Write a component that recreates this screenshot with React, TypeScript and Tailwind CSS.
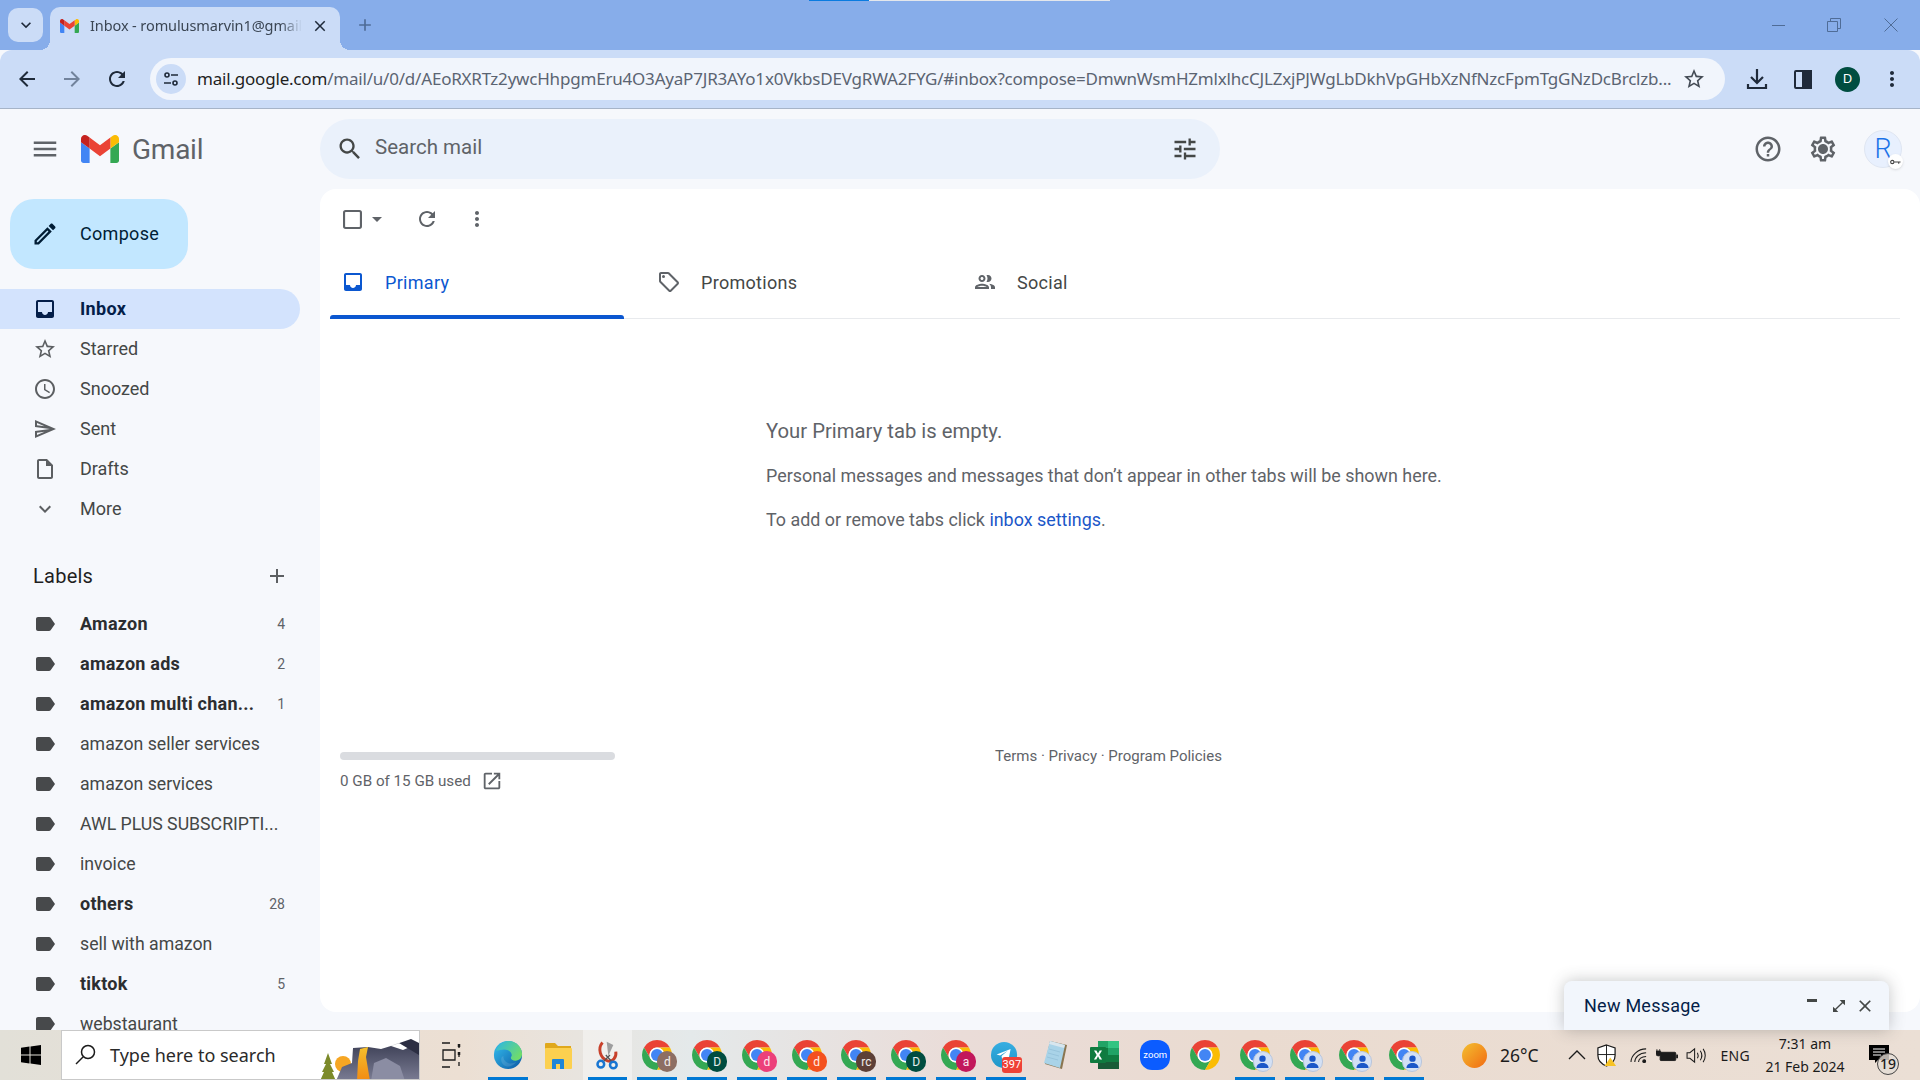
import { ReactNode } from 'react';

const URL_PATH = '/mail/u/0/d/AEoRXRTz2ywcHhpgmEru4O3AyaP7JR3AYo1x0VkbsDEVgRWA2FYG/#inbox?compose=DmwnWsmHZmlxlhcCJLZxjPJWgLbDkhVpGHbXzNfNzcFpmTgGNzDcBrclzb...';

const P = {
  inbox: 'M19 3H4.99c-1.11 0-1.98.89-1.98 2L3 19c0 1.1.88 2 1.99 2H19c1.1 0 2-.9 2-2V5c0-1.11-.9-2-2-2zm0 12h-4c0 1.66-1.35 3-3 3s-3-1.34-3-3H4.99V5H19v10z',
  star: 'M22 9.24l-7.19-.62L12 2 9.19 8.63 2 9.24l5.46 4.73L5.82 21 12 17.27 18.18 21l-1.63-7.03L22 9.24zM12 15.4l-3.76 2.27 1-4.28-3.32-2.88 4.38-.38L12 6.1l1.71 4.04 4.38.38-3.32 2.88 1 4.28L12 15.4z',
  clock: 'M11.99 2C6.47 2 2 6.48 2 12s4.47 10 9.99 10C17.52 22 22 17.52 22 12S17.52 2 11.99 2zM12 20c-4.42 0-8-3.58-8-8s3.58-8 8-8 8 3.58 8 8-3.58 8-8 8zm.5-13H11v6l5.25 3.15.75-1.23-4.5-2.67z',
  sent: 'M4.01 6.03l7.51 3.22-7.52-1 .01-2.22m7.5 8.72L4 17.97v-2.22l7.51-1M2.01 3L2 10l15 2-15 2 .01 7L23 12 2.01 3z',
  draft: 'M14 2H6c-1.1 0-2 .9-2 2v16c0 1.1.9 2 2 2h12c1.1 0 2-.9 2-2V8l-6-6zm4 18H6V4h7v5h5v11z',
  chevron: 'M16.59 8.59L12 13.17 7.41 8.59 6 10l6 6 6-6z',
  label: 'M17.63 5.84C17.27 5.33 16.67 5 16 5L5 5.01C3.9 5.01 3 5.9 3 7v10c0 1.1.9 1.99 2 1.99L16 19c.67 0 1.27-.33 1.63-.84L22 12l-4.37-6.16z',
  refresh: 'M17.65 6.35C16.2 4.9 14.21 4 12 4c-4.42 0-7.99 3.58-7.99 8s3.57 8 7.99 8c3.73 0 6.84-2.55 7.73-6h-2.08c-.82 2.33-3.04 4-5.65 4-3.31 0-6-2.69-6-6s2.69-6 6-6c1.66 0 3.14.69 4.22 1.78L13 11h7V4l-2.35 2.35z',
  dots: 'M12 8c1.1 0 2-.9 2-2s-.9-2-2-2-2 .9-2 2 .9 2 2 2zm0 2c-1.1 0-2 .9-2 2s.9 2 2 2 2-.9 2-2-.9-2-2-2zm0 6c-1.1 0-2 .9-2 2s.9 2 2 2 2-.9 2-2-.9-2-2-2z',
  tune: 'M3 17v2h6v-2H3zM3 5v2h10V5H3zm10 16v-2h8v-2h-8v-2h-2v6h2zM7 9v2H3v2h4v2h2V9H7zm14 4v-2H11v2h10zm-6-4h2V7h4V5h-4V3h-2v6z',
  search: 'M15.5 14h-.79l-.28-.27C15.41 12.59 16 11.11 16 9.5 16 5.91 13.09 3 9.5 3S3 5.91 3 9.5 5.91 16 9.5 16c1.61 0 3.09-.59 4.23-1.57l.27.28v.79l5 4.99L20.49 19l-4.99-5zm-6 0C7.01 14 5 11.99 5 9.5S7.01 5 9.5 5 14 7.01 14 9.5 11.99 14 9.5 14z',
  help: 'M11 18h2v-2h-2v2zm1-16C6.48 2 2 6.48 2 12s4.48 10 10 10 10-4.48 10-10S17.52 2 12 2zm0 18c-4.41 0-8-3.59-8-8s3.59-8 8-8 8 3.59 8 8-3.59 8-8 8zm0-14c-2.21 0-4 1.79-4 4h2c0-1.1.9-2 2-2s2 .9 2 2c0 2-3 1.75-3 5h2c0-2.25 3-2.5 3-5 0-2.21-1.79-4-4-4z',
  gear: 'M19.43 12.98c.04-.32.07-.64.07-.98 0-.34-.03-.66-.07-.98l2.11-1.65c.19-.15.24-.42.12-.64l-2-3.46c-.09-.16-.26-.25-.44-.25-.06 0-.12.01-.17.03l-2.49 1c-.52-.4-1.08-.73-1.69-.98l-.38-2.65C14.46 2.18 14.25 2 14 2h-4c-.25 0-.46.18-.49.42l-.38 2.65c-.61.25-1.17.59-1.69.98l-2.49-1c-.06-.02-.12-.03-.18-.03-.17 0-.34.09-.43.25l-2 3.46c-.13.22-.07.49.12.64l2.11 1.65c-.04.32-.07.65-.07.98 0 .33.03.66.07.98l-2.11 1.65c-.19.15-.24.42-.12.64l2 3.46c.09.16.26.25.44.25.06 0 .12-.01.17-.03l2.49-1c.52.4 1.08.73 1.69.98l.38 2.65c.03.24.24.42.49.42h4c.25 0 .46-.18.49-.42l.38-2.65c.61-.25 1.17-.59 1.69-.98l2.49 1c.06.02.12.03.18.03.17 0 .34-.09.43-.25l2-3.46c.12-.22.07-.49-.12-.64l-2.11-1.65zm-1.98-1.71c.04.31.05.52.05.73 0 .21-.02.43-.05.73l-.14 1.13.89.7 1.08.84-.7 1.21-1.27-.51-1.04-.42-.9.68c-.43.32-.84.56-1.25.73l-1.06.43-.16 1.13-.2 1.35h-1.4l-.19-1.35-.16-1.13-1.06-.43c-.43-.18-.83-.41-1.23-.71l-.91-.7-1.06.43-1.27.51-.7-1.21 1.08-.84.89-.7-.14-1.13c-.03-.31-.05-.54-.05-.74s.02-.43.05-.73l.14-1.13-.89-.7-1.08-.84.7-1.21 1.27.51 1.04.42.9-.68c.43-.32.84-.56 1.25-.73l1.06-.43.16-1.13.2-1.35h1.39l.19 1.35.16 1.13 1.06.43c.43.18.83.41 1.23.71l.91.7 1.06-.43 1.27-.51.7 1.21-1.07.85-.89.7.14 1.13zM12 8c-2.21 0-4 1.79-4 4s1.79 4 4 4 4-1.79 4-4-1.79-4-4-4z',
  offer: 'M21.41 11.58l-9-9C12.05 2.22 11.55 2 11 2H4c-1.1 0-2 .9-2 2v7c0 .55.22 1.05.59 1.42l9 9c.36.36.86.58 1.41.58s1.05-.22 1.41-.59l7-7c.37-.36.59-.86.59-1.41s-.23-1.06-.59-1.42zM13 20.01L4 11V4h7v-.01l9 9-7 7.02zM6.5 5A1.5 1.5 0 1 0 6.5 8 1.5 1.5 0 1 0 6.5 5z',
  people: 'M9 13.75c-2.34 0-7 1.17-7 3.5V19h14v-1.75c0-2.33-4.66-3.5-7-3.5zM4.34 17c.84-.58 2.87-1.25 4.66-1.25s3.82.67 4.66 1.25H4.34zM9 12c1.93 0 3.5-1.57 3.5-3.5S10.93 5 9 5 5.5 6.57 5.5 8.5 7.07 12 9 12zm0-5c.83 0 1.5.67 1.5 1.5S9.83 10 9 10s-1.5-.67-1.5-1.5S8.17 7 9 7zm7.04 6.81c1.16.84 1.96 1.96 1.96 3.44V19h4v-1.75c0-2.02-3.5-3.17-5.96-3.44zM15 12c1.93 0 3.5-1.57 3.5-3.5S16.93 5 15 5c-.54 0-1.04.13-1.5.35.63.89 1 1.98 1 3.15s-.37 2.26-1 3.15c.46.22.96.35 1.5.35z',
  open: 'M19 19H5V5h7V3H5c-1.11 0-2 .9-2 2v14c0 1.1.89 2 2 2h14c1.1 0 2-.9 2-2v-7h-2v7zM14 3v2h3.59l-9.83 9.83 1.41 1.41L19 6.41V10h2V3h-7z',
  back: 'M20 11H7.83l5.59-5.59L12 4l-8 8 8 8 1.41-1.41L7.83 13H20v-2z',
  forward: 'M4 11h12.17l-5.59-5.59L12 4l8 8-8 8-1.41-1.41L16.17 13H4v-2z',
  plus: 'M19 13h-6v6h-2v-6H5v-2h6V5h2v6h6v2z',
  close: 'M19 6.41L17.59 5 12 10.59 6.41 5 5 6.41 10.59 12 5 17.59 6.41 19 12 13.41 17.59 19 19 17.59 13.41 12z',
  menu: 'M3 18h18v-2H3v2zm0-5h18v-2H3v2zm0-7v2h18V6H3z',
  pen: 'M14.06 9.02l.92.92L5.92 19H5v-.92l9.06-9.06M17.66 3c-.25 0-.51.1-.7.29l-1.83 1.83 3.75 3.75 1.83-1.83c.39-.39.39-1.02 0-1.41l-2.34-2.34c-.2-.2-.45-.29-.71-.29zm-3.6 3.19L3 17.25V21h3.75L17.81 9.94l-3.75-3.75z',
  expand: 'M21 11V3h-8l3.29 3.29-10 10L3 13v8h8l-3.29-3.29 10-10z',
};

const Icon = ({ d, size = 24, className = '' }: { d: string; size?: number; className?: string }) => (
  <svg viewBox="0 0 24 24" width={size} height={size} className={`shrink-0 fill-current ${className}`}>
    <path d={d} />
  </svg>
);

const GmailLogo = ({ w, h }: { w: number; h: number }) => (
  <svg viewBox="52 42 88 66" width={w} height={h} className="shrink-0" preserveAspectRatio="none">
    <path fill="#4285f4" d="M58 108h14V74L52 59v43c0 3.32 2.69 6 6 6" />
    <path fill="#34a853" d="M120 108h14c3.32 0 6-2.69 6-6V59l-20 15" />
    <path fill="#fbbc04" d="M120 48v26l20-15v-8c0-7.42-8.47-11.65-14.4-7.2" />
    <path fill="#ea4335" d="M72 74V48l24 18 24-18v26L96 92" />
    <path fill="#c5221f" d="M52 51v8l20 15V48l-5.6-4.2c-5.94-4.45-14.4-.22-14.4 7.2" />
  </svg>
);

const ChromeIcon = () => (
  <svg viewBox="4 4 40 40" width={30} height={30} className="shrink-0">
    <path fill="#ea4335" d="M24 4A20 20 0 0 1 41.32 14H24A10 10 0 0 0 15.34 29L6.68 14A20 20 0 0 1 24 4z" />
    <path fill="#34a853" d="M6.68 14A20 20 0 0 0 24 44L32.66 29A10 10 0 0 1 15.34 29z" />
    <path fill="#fbbc04" d="M41.32 14H24A10 10 0 0 1 32.66 29L24 44A20 20 0 0 0 41.32 14z" />
    <circle cx="24" cy="24" r="10" fill="#fff" />
    <circle cx="24" cy="24" r="8" fill="#4285f4" />
  </svg>
);

const ProfileChrome = ({ letter, bg }: { letter?: string; bg?: string }) => (
  <div className="relative w-[30px] h-[30px]">
    <ChromeIcon />
    {letter ? (
      <div className={`absolute left-[15px] top-[11px] w-[20px] h-[21px] rounded-full flex items-center justify-center text-[12px] text-white/90 font-[family-name:Roboto,sans-serif] ${bg}`}>
        {letter}
      </div>
    ) : (
      <div className="absolute left-[13px] top-[11px] w-[20px] h-[21px] rounded-full bg-[#d3e0f5] border border-[#b9c6dc] flex items-center justify-center">
        <svg viewBox="0 0 24 24" width={17} height={17} className="fill-[#1a56c8]">
          <circle cx="12" cy="8" r="4.5" />
          <path d="M3.5 21c0-4.5 4-7 8.5-7s8.5 2.5 8.5 7z" />
        </svg>
      </div>
    )}
  </div>
);

const EdgeIcon = () => (
  <svg viewBox="0 0 32 32" width={30} height={32}>
    <defs>
      <linearGradient id="edgeA" x1="0" y1="0" x2="1" y2="1">
        <stop offset="0" stopColor="#35c1f1" />
        <stop offset="1" stopColor="#0c59a4" />
      </linearGradient>
      <linearGradient id="edgeB" x1="0" y1="0" x2="1" y2="0.6">
        <stop offset="0" stopColor="#2bb6e6" />
        <stop offset="1" stopColor="#6fdc6c" />
      </linearGradient>
    </defs>
    <circle cx="16" cy="16" r="15" fill="url(#edgeA)" />
    <path d="M3 11C6 3 13 1 17 1c7 0 14 6 14 14 0 4-3 7-7 7-3 0-5-1-5-3 0-1 1-1.5 1-3 0-3-3.5-6-8-6-4 0-7.5 2-9 1z" fill="url(#edgeB)" />
    <path d="M11 17c0 5 4 8 8 8 2 0 4-.5 6-2-3 5-8 6-11 5-4-1-6-5-5-9 .5-1.5 2-2 2-2z" fill="#fff" fillOpacity=".12" />
  </svg>
);

const FolderIcon = () => (
  <svg viewBox="0 0 28 30" width={28} height={30}>
    <path d="M1 4a1 1 0 0 1 1-1h9l3 3h13v4H1z" fill="#e0a81c" />
    <rect x="1" y="8" width="27" height="21" rx="1" fill="#fcd04f" />
    <path d="M8 29v-9a1 1 0 0 1 1-1h10a1 1 0 0 1 1 1v9h-4v-5h-4v5z" fill="#1f86d6" />
  </svg>
);

const SnipIcon = () => (
  <svg viewBox="0 0 30 36" width={25} height={32} fill="none">
    <path d="M9 3C3 10 6 22 15 25c6 2 11-4 10-11" stroke="#c8412b" strokeWidth="3.5" />
    <path d="M14 2l2 17 6-13z" fill="#9e9e9e" />
    <path d="M18 18L9 27M13 18l8 9" stroke="#555" strokeWidth="1.5" />
    <circle cx="7" cy="29" r="4" stroke="#1976d2" strokeWidth="3" />
    <circle cx="22" cy="30" r="4" stroke="#1976d2" strokeWidth="3" />
  </svg>
);

const TelegramIcon = () => (
  <div className="relative w-[30px] h-[30px]">
    <svg viewBox="0 0 30 30" width={28} height={30}>
      <defs>
        <linearGradient id="tg" x1="0.5" y1="0" x2="0.5" y2="1">
          <stop offset="0" stopColor="#37aee2" />
          <stop offset="1" stopColor="#1e96c8" />
        </linearGradient>
      </defs>
      <circle cx="14" cy="15" r="14" fill="url(#tg)" />
      <path d="M6 14.5l15-6-2.5 13-4.5-3.5-2 2.2-.7-4.2 6.5-5.5-8 5z" fill="#fff" />
    </svg>
    <div className="absolute left-[11px] top-[17px] w-[20px] h-[16px] rounded-[3px] bg-[#ef4136] text-white text-[11px] leading-[16px] text-center font-[family-name:Roboto,sans-serif]">397</div>
  </div>
);

const NotepadIcon = () => (
  <svg viewBox="0 0 30 30" width={30} height={30}>
    <path d="M9 1l17 4-5 24-17-5z" fill="#8a7550" />
    <path d="M9 1l15 4-5 23L3 23z" fill="#a9d3e8" />
    <path d="M9 1l15 4-1 3L8 4z" fill="#d8e6ee" />
    <path d="M8 9l11 3M7 13l11 3M6 17l11 3" stroke="#8fbdd6" strokeWidth=".7" />
  </svg>
);

const ExcelIcon = () => (
  <svg viewBox="0 0 30 30" width={30} height={30}>
    <rect x="8" y="1" width="21" height="28" fill="#107c41" />
    <rect x="18" y="1" width="11" height="7" fill="#33c481" />
    <rect x="8" y="1" width="10" height="7" fill="#21a366" />
    <rect x="18" y="8" width="11" height="7" fill="#21a366" />
    <rect x="18" y="22" width="11" height="7" fill="#185c37" />
    <rect x="8" y="22" width="10" height="7" fill="#185c37" />
    <rect x="0" y="7" width="16" height="16" rx="1" fill="#0f7b3f" />
    <path d="M4 10.5h2.4L8 13.6l1.7-3.1H12L9.3 15l2.8 4.5H9.700L8 16.300 6.300 19.500H3.900L6.700 15z" fill="#fff" />
  </svg>
);

const ZoomIcon = () => (
  <div className="w-[30px] h-[30px] rounded-[12px] bg-[#0b5cff] text-white text-[9.5px] leading-[30px] text-center font-[family-name:Roboto,sans-serif]">zoom</div>
);

// what sits in each taskbar slot, left to right
const taskbarItems: { icon: ReactNode; active?: boolean; highlight?: boolean }[] = [
  { icon: <EdgeIcon />, active: true },
  { icon: <FolderIcon /> },
  { icon: <SnipIcon />, active: true, highlight: true },
  { icon: <ProfileChrome letter="d" bg="bg-[#8d6e63]" />, active: true },
  { icon: <ProfileChrome letter="D" bg="bg-[#004d40]" />, active: true },
  { icon: <ProfileChrome letter="d" bg="bg-[#ec407a]" />, active: true },
  { icon: <ProfileChrome letter="d" bg="bg-[#f4511e]" />, active: true },
  { icon: <ProfileChrome letter="rc" bg="bg-[#5d4037]" />, active: true },
  { icon: <ProfileChrome letter="D" bg="bg-[#004d40]" />, active: true },
  { icon: <ProfileChrome letter="a" bg="bg-[#c2185b]" />, active: true },
  { icon: <TelegramIcon />, active: true },
  { icon: <NotepadIcon /> },
  { icon: <ExcelIcon /> },
  { icon: <ZoomIcon /> },
  { icon: <ChromeIcon /> },
  { icon: <ProfileChrome />, active: true },
  { icon: <ProfileChrome />, active: true },
  { icon: <ProfileChrome />, active: true },
  { icon: <ProfileChrome />, active: true },
];

const navItems = [
  { name: 'Starred', d: P.star },
  { name: 'Snoozed', d: P.clock },
  { name: 'Sent', d: P.sent },
  { name: 'Drafts', d: P.draft },
  { name: 'More', d: P.chevron },
];

const labels = [
  { name: 'Amazon', count: 4 },
  { name: 'amazon ads', count: 2 },
  { name: 'amazon multi chan...', count: 1 },
  { name: 'amazon seller services' },
  { name: 'amazon services' },
  { name: 'AWL PLUS SUBSCRIPTI...' },
  { name: 'invoice' },
  { name: 'others', count: 28 },
  { name: 'sell with amazon' },
  { name: 'tiktok', count: 5 },
  { name: 'webstaurant' },
];

function TabStrip() {
  return (
    <div className="relative h-[50px] shrink-0 flex items-end bg-[#87ADEA] font-[family-name:'Noto_Sans',sans-serif]">
      <div className="absolute left-[809px] top-0 h-px w-[60px] bg-[#0a7be0]" />
      <div className="absolute left-[869px] top-0 h-px w-[241px] bg-[#e4e7ec]" />
      <div className="self-start mt-[8px] ml-[8px] w-[35px] h-[34px] rounded-[10px] bg-[#CBDCF7] flex items-center justify-center text-[#1f2a3a]">
        <Icon d={P.chevron} size={20} />
      </div>
      <div className="relative ml-[7px] w-[290px] h-[43px] rounded-t-[10px] bg-[#CBDCF7] flex items-center pl-[10px] pb-[6px]">
        <div className="absolute -left-[10px] bottom-0 w-[10px] h-[10px] bg-[radial-gradient(circle_at_0_0,transparent_10px,#CBDCF7_10px)]" />
        <div className="absolute -right-[10px] bottom-0 w-[10px] h-[10px] bg-[radial-gradient(circle_at_100%_0,transparent_10px,#CBDCF7_10px)]" />
        <GmailLogo w={19} h={14} />
        <span className="ml-[11px] w-[212px] whitespace-nowrap text-[14.5px] text-[#3b4654] tracking-[-0.1px] [mask-image:linear-gradient(90deg,#000_90%,transparent_100%)]">Inbox - romulusmarvin1@gmail</span>
        <Icon d={P.close} size={18} className="ml-[9px] text-[#1f2a3a]" />
      </div>
      <div className="self-center ml-[15px] text-[#4f6c97]">
        <Icon d={P.plus} size={20} />
      </div>
      <div className="ml-auto self-center flex items-center text-[#4f6c97]">
        <div className="w-[56px] flex justify-center"><div className="w-[13px] h-px bg-[#4f6c97]" /></div>
        <div className="w-[56px] flex justify-center">
          <svg viewBox="0 0 14 14" width={14} height={14} fill="none" stroke="currentColor"><path d="M.5 3.500h10v10H.5zM3.500 3.500v-3h10v10h-3" /></svg>
        </div>
        <div className="w-[58px] flex justify-center">
          <svg viewBox="0 0 14 14" width={14} height={14} fill="none" stroke="currentColor"><path d="M.5.500l13 13M13.500.500l-13 13" /></svg>
        </div>
      </div>
    </div>
  );
}

function AddressBar() {
  return (
    <div className="h-[59px] shrink-0 flex items-center rounded-t-[12px] bg-[#CBDCF7] border-b border-[#a6b4c8] font-[family-name:'Noto_Sans',sans-serif]">
      <div className="w-[54px] pl-[15px] text-[#1f2a3a]"><Icon d={P.back} /></div>
      <div className="w-[45px] pl-[6px] text-[#72839c]"><Icon d={P.forward} /></div>
      <div className="w-[51px] pl-[6px] text-[#1f2a3a]"><Icon d={P.refresh} /></div>
      <div className="w-[1575px] h-[42px] rounded-full bg-[#F1F5FC] flex items-center pl-[6px]">
        <div className="w-[30px] h-[30px] rounded-full bg-[#CBDCF7] flex items-center justify-center">
          <svg viewBox="0 0 16 16" width={16} height={16} fill="none" stroke="#1f2a3a" strokeWidth="1.6">
            <circle cx="4" cy="4" r="2" />
            <path d="M8 4h7M1 12h7" />
            <circle cx="12" cy="12" r="2" />
          </svg>
        </div>
        <span className="ml-[11px] w-[1475px] whitespace-nowrap text-[17px] tracking-[-0.2px] text-[#5b6472]">
          <span className="text-[#1f1f1f]">mail.google.com</span>{URL_PATH}
        </span>
        <Icon d={P.star} size={24} className="ml-[10px] text-[#444b55]" />
      </div>
      <div className="ml-[20px] w-[24px] text-[#1f2a3a]">
        <svg viewBox="0 0 24 24" width={24} height={24} fill="none" stroke="currentColor" strokeWidth="2.200">
          <path d="M12 2v13M6 10l6 6 6-6M3 17v4h18v-4" />
        </svg>
      </div>
      <div className="ml-[22px] w-[24px] text-[#1f2a3a]">
        <svg viewBox="0 0 24 24" width={24} height={24} fill="none" stroke="currentColor" strokeWidth="2">
          <rect x="4" y="4" width="16" height="17" rx="1" />
          <rect x="12" y="4" width="8" height="17" fill="currentColor" />
        </svg>
      </div>
      <div className="ml-[20px] w-[25px] h-[25px] rounded-full bg-[#004d40] text-white text-[13px] flex items-center justify-center">D</div>
      <div className="ml-[20px] text-[#1f2a3a]"><Icon d={P.dots} size={24} /></div>
    </div>
  );
}

function Sidebar() {
  return (
    <div className="w-[320px] shrink-0 flex flex-col overflow-hidden">
      <div className="h-[80px] shrink-0 flex items-center pl-[30px] text-[#5f6368]">
        <Icon d={P.menu} size={30} />
        <div className="ml-[21px]"><GmailLogo w={38} h={28} /></div>
        <span className="ml-[13px] pt-[2px] text-[28px] tracking-[-0.25px] text-[#5f6368]">Gmail</span>
      </div>
      <div className="mt-[10px] ml-[10px] w-[178px] h-[70px] shrink-0 rounded-[24px] bg-[#C2E7FF] flex items-center pl-[21px] text-[#001d35]">
        <Icon d={P.pen} size={28} />
        <span className="ml-[21px] text-[18px] tracking-[0.3px] pb-[2px]">Compose</span>
      </div>
      <div className="mt-[20px] w-[300px] h-[40px] shrink-0 rounded-r-full bg-[#D3E3FD] flex items-center pl-[33px] text-[#041e49]">
        <Icon d={P.inbox} />
        <span className="ml-[23px] pb-[2px] text-[18px] font-bold tracking-[0.35px]">Inbox</span>
      </div>
      {navItems.map((item) => (
        <div key={item.name} className="h-[40px] shrink-0 flex items-center pl-[33px] text-[#444746]">
          <Icon d={item.d} className="text-[#5c5f62]" />
          <span className="ml-[23px] pb-[2px] text-[18px]">{item.name}</span>
        </div>
      ))}
      <div className="mt-[27px] h-[40px] shrink-0 flex items-center justify-between pl-[33px] pr-[31px] text-[#1f1f1f]">
        <span className="text-[20px] tracking-[0.25px]">Labels</span>
        <Icon d={P.plus} className="text-[#5c5f62]" />
      </div>
      <div className="mt-[8px] flex flex-col">
        {labels.map((l) => (
          <div key={l.name} className="h-[40px] shrink-0 flex items-center pl-[33px] pr-[35px] text-[#444746]">
            <Icon d={P.label} className="text-[#47494b]" />
            <span className={`ml-[23px] min-w-0 flex-1 whitespace-nowrap ${l.count ? 'pb-[1px] text-[18px] font-bold tracking-[0.25px] text-[#2c2e30]' : 'text-[17.7px]'}`}>{l.name}</span>
            {l.count && <span className="ml-[8px] text-[14px] text-[#5f6368]">{l.count}</span>}
          </div>
        ))}
      </div>
    </div>
  );
}

function MainPanel() {
  return (
    <div className="flex-1 mb-[18px] rounded-2xl bg-white flex flex-col min-h-0">
      <div className="h-[60px] shrink-0 flex items-center pl-[23px] text-[#444746]">
        <svg viewBox="0 0 18 18" width={19} height={19} fill="none" stroke="#5f6368" strokeWidth="2" className="mr-[10px]"><rect x="1" y="1" width="16" height="16" rx="1.500" /></svg>
        <svg viewBox="0 0 10 5" width={10} height={5} className="fill-[#5f6368] mr-[33px]"><path d="M0 0h10L5 5z" /></svg>
        <Icon d={P.refresh} size={24} className="mr-[26px] text-[#5f6368]" />
        <Icon d={P.dots} size={24} className="text-[#5f6368]" />
      </div>
      <div className="relative h-[70px] shrink-0 ml-[10px] mr-[20px] flex gap-[22px] border-b border-[#e8eaed] pb-[3px]">
        <div className="relative w-[294px] flex items-center pl-[11px] text-[#0b57d0]">
          <Icon d={P.inbox} className="text-[#0b57d0]" />
          <span className="ml-[20px] text-[18px] tracking-[0.3px]">Primary</span>
          <div className="absolute left-0 right-0 bottom-[-4px] h-[4px] rounded-t-[3px] bg-[#0b57d0]" />
        </div>
        <div className="w-[294px] flex items-center pl-[11px] text-[#444746]">
          <Icon d={P.offer} className="text-[#5f6368]" />
          <span className="ml-[20px] text-[18px] tracking-[0.3px]">Promotions</span>
        </div>
        <div className="w-[294px] flex items-center pl-[11px] text-[#444746]">
          <Icon d={P.people} className="text-[#5f6368]" />
          <span className="ml-[20px] text-[18px] tracking-[0.3px]">Social</span>
        </div>
      </div>
      <div className="ml-[446px] mt-[97px] text-[#5f6368]">
        <div className="h-[30px] leading-[30px] text-[20.3px]">Your Primary tab is empty.</div>
        <div className="mt-[15px] h-[30px] leading-[30px] text-[17.9px]">Personal messages and messages that don’t appear in other tabs will be shown here.</div>
        <div className="mt-[15px] h-[28px] leading-[28px] text-[17.9px]">To add or remove tabs click <span className="text-[#1a56c8]">inbox settings</span>.</div>
      </div>
      <div className="mt-[218px] pl-[20px] flex">
        <div className="w-[275px]">
          <div className="h-[8px] rounded-full bg-[#dadce0]" />
          <div className="mt-[11px] flex items-center h-[20px] text-[15.2px] text-[#5f6368]">
            <span>0 GB of 15 GB used</span>
            <Icon d={P.open} size={22} className="ml-[10px] text-[#5f6368]" />
          </div>
        </div>
        <div className="ml-[380px] -mt-[6px] h-[20px] leading-[20px] text-[15px] text-[#5f6368]">Terms · Privacy · Program Policies</div>
      </div>
    </div>
  );
}

function TopBar() {
  return (
    <div className="h-[80px] shrink-0 flex items-center pr-[18px]">
      <div className="w-[900px] h-[60px] mt-[-1px] rounded-full bg-[#EAF1FB] flex items-center pl-[16px] pr-[21px] text-[#444746]">
        <Icon d={P.search} size={28} />
        <span className="ml-[11px] pb-[2px] text-[20.5px] text-[#5f6368]">Search mail</span>
        <Icon d={P.tune} size={28} className="ml-auto" />
      </div>
      <Icon d={P.help} size={30} className="ml-[533px] text-[#5f6368]" />
      <Icon d={P.gear} size={30} className="ml-[25px] text-[#5f6368]" />
      <div className="relative ml-[26px] w-[38px] h-[38px] rounded-full bg-[#e8f0fe] border border-[#dfe6f2] flex items-center justify-center text-[#1a73e8] text-[27px] font-light">
        R
        <div className="absolute left-[23px] top-[23px] w-[15px] h-[15px] rounded-full bg-white shadow flex items-center justify-center">
          <svg viewBox="0 0 12 8" width={11} height={8} fill="none" stroke="#444" strokeWidth="1.200"><circle cx="2.500" cy="4" r="1.800" /><path d="M4.500 4H11.500M9.500 4v2" /></svg>
        </div>
      </div>
    </div>
  );
}

function ComposeBar() {
  return (
    <div className="absolute right-[31px] bottom-0 w-[325px] h-[49px] rounded-t-lg bg-[#F2F6FC] shadow-[0_0_16px_rgba(60,64,67,0.3)] flex items-start pl-[20px] pt-[14px]">
      <span className="text-[18px] tracking-[0.25px] leading-[22px] text-[#041e49]">New Message</span>
      <div className="ml-auto flex items-start mr-[15px] text-[#444746]">
        <div className="w-[10px] h-[3px] mt-[4px] mr-[14px] bg-[#444746]" />
        <Icon d={P.expand} size={16} className="mt-[3px] mr-[8px]" />
        <Icon d={P.close} size={20} className="mt-[1px] -mr-[1px]" />
      </div>
    </div>
  );
}

function Taskbar() {
  return (
    <div className="h-[50px] shrink-0 flex items-center bg-[linear-gradient(90deg,#e2e0d8_0%,#ecdfd3_24%,#e4e9ea_36%,#eadcd8_50%,#eadbd0_65%,#ebdfd5_100%)] font-[family-name:'Noto_Sans',sans-serif] text-[#1b1b1b]">
      <div className="w-[61px] flex justify-center">
        <svg viewBox="0 0 20 20" width={20} height={20} className="fill-black">
          <path d="M0 2.800l8.500-1.200v8H0zM9.500 1.400L20 0v9.600H9.500zM0 10.400h8.500v8L0 17.200zM9.500 10.400H20V20L9.500 18.600z" />
        </svg>
      </div>
      <div className="relative h-full w-[359px] bg-white border border-[#c9c9c9] flex items-center pl-[11px] overflow-hidden">
        <svg viewBox="0 0 24 24" width={24} height={24} fill="none" stroke="#1b1b1b" strokeWidth="1.500"><circle cx="15" cy="9" r="6.500" /><path d="M10 14l-7 7" /></svg>
        <span className="ml-[13px] text-[18px] text-[#2a2a2a]">Type here to search</span>
        <svg viewBox="0 0 100 50" width={100} height={50} className="absolute right-0 top-0">
          <defs>
            <linearGradient id="rock" x1="0" y1="0" x2="0" y2="1">
              <stop offset="0" stopColor="#3c3f55" />
              <stop offset="1" stopColor="#7b7d94" />
            </linearGradient>
            <linearGradient id="lava" x1="0" y1="0" x2="0" y2="1">
              <stop offset="0" stopColor="#f5c02c" />
              <stop offset="1" stopColor="#f28a12" />
            </linearGradient>
          </defs>
          <circle cx="24" cy="33" r="8" fill="#f6a623" />
          <path d="M1 50l4-9H3l4-8H5l4-11 4 11h-2l4 8h-2l4 9z" fill="#7c8a2a" />
          <path d="M17 50l6-14 10-4 1-15 15-1 13 2 10-3 12 4 16-7v38z" fill="url(#rock)" />
          <path d="M41 18l8-2-2 10 4 24H38l1-20z" fill="url(#lava)" />
          <path d="M55 32l12-5 14 8 5 15H52z" fill="#8b8da3" />
          <path d="M66 17l14-5 20 12V12l-8-4z" fill="#2b2e42" />
        </svg>
      </div>
      <div className="w-[63px] flex justify-center">
        <svg viewBox="0 0 22 26" width={22} height={26} fill="none" stroke="#1b1b1b" strokeWidth="1.300">
          <path d="M1 1h8M1 25h8M2 8h12v10H2zM1 4v0M18 2v4M18 11v4M18 20v4" strokeWidth="1.300" />
          <path d="M18 2v3M18 10v3" strokeWidth="2.500" />
        </svg>
      </div>
      {taskbarItems.map((item, i) => (
        <div key={i} className={`relative w-[49.8px] h-full flex items-center justify-center ${item.highlight ? 'bg-white/40' : ''}`}>
          {item.icon}
          {item.active && <div className="absolute bottom-0 left-[5px] right-[5px] h-[3px] bg-[#0078d4]" />}
        </div>
      ))}
      <div className="ml-auto flex items-center h-full">
        <div className="w-[25px] h-[25px] rounded-full bg-[linear-gradient(135deg,#f3c030,#f26a12)]" />
        <span className="ml-[13px] text-[17.5px]">26°C</span>
        <svg viewBox="0 0 18 10" width={18} height={10} fill="none" stroke="#1b1b1b" strokeWidth="1.300" className="ml-[30px]"><path d="M1 9l8-8 8 8" /></svg>
        <svg viewBox="0 0 22 24" width={21} height={23} className="ml-[10px]">
          <path d="M11 1l9 3v8c0 5-4 9-9 11-5-2-9-6-9-11V4z" fill="#fff" stroke="#1b1b1b" strokeWidth="1.300" />
          <path d="M11 1v22M2 11h18" stroke="#1b1b1b" />
          <path d="M15 14l6 9H9z" fill="#f7c325" />
        </svg>
        <svg viewBox="0 0 20 18" width={19} height={17} fill="none" stroke="#1b1b1b" strokeWidth="1.100" className="ml-[13px]">
          <path d="M1 16C1 9 8 2 17 2M5 16c0-5 5-10 12-10M9 16c0-3 3-6 8-6" />
          <circle cx="15" cy="15" r="1.500" fill="#1b1b1b" />
        </svg>
        <svg viewBox="0 0 24 14" width={22} height={13} className="ml-[7px]">
          <rect x="4.500" y="3.500" width="17" height="9" rx="1" fill="#1b1b1b" stroke="#1b1b1b" />
          <rect x="22" y="6" width="2" height="4" fill="#1b1b1b" />
          <path d="M0 2h5v3a2 2 0 0 1-5 0zM1 0v2M4 0v2" fill="#1b1b1b" stroke="#1b1b1b" strokeWidth=".8" />
        </svg>
        <svg viewBox="0 0 22 18" width={21} height={17} fill="none" stroke="#1b1b1b" strokeWidth="1.100" className="ml-[8px]">
          <path d="M1 6h3l5-4v14l-5-4H1zM12 6c1 2 1 4 0 6M15 4c2 3 2 7 0 10M18 2c3 4 3 10 0 14" />
        </svg>
        <span className="ml-[13px] text-[14px] tracking-[0.3px]">ENG</span>
        <div className="w-[84px] ml-[13px] flex flex-col items-center text-[14px] leading-[23px]">
          <span>7:31 am</span>
          <span>21 Feb 2024</span>
        </div>
        <div className="relative ml-[22px] mr-[28px] w-[23px] h-[40px]">
          <svg viewBox="0 0 20 18" width={20} height={18} className="absolute left-0 top-[10px] fill-black">
            <path d="M0 0h20v15H9l-3 3v-3H0z" />
            <path d="M4 4h12M4 7h12M4 10h8" stroke="#fff" />
          </svg>
          <div className="absolute left-[8px] top-[18px] w-[22px] h-[22px] rounded-full border border-[#444] bg-[#e3dcd4]/80 text-[14px] leading-[20px] text-center font-medium">19</div>
        </div>
      </div>
    </div>
  );
}

export default function App() {
  return (
    <div className="w-[1920px] h-[1080px] flex flex-col overflow-hidden bg-[#F6F8FC] font-[family-name:Roboto,sans-serif]">
      <TabStrip />
      <AddressBar />
      <div className="relative flex-1 min-h-0 flex">
        <Sidebar />
        <div className="flex-1 min-w-0 flex flex-col">
          <TopBar />
          <MainPanel />
        </div>
        <ComposeBar />
      </div>
      <Taskbar />
    </div>
  );
}
